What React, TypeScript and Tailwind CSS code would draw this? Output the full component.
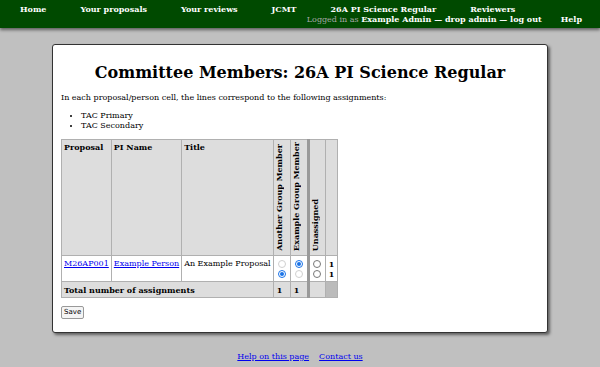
import React from "react"

const navTop = ["Home", "Your proposals", "Your reviews", "JCMT", "26A PI Science Regular", "Reviewers"]

function Radio({ checked, faint }: { checked?: boolean; faint?: boolean }) {
  if (checked) {
    return (
      <span className="mx-auto flex h-[8px] w-[8px] items-center justify-center rounded-full border border-[#1a73e8] bg-white">
        <span className="h-[4px] w-[4px] rounded-full bg-[#1a73e8]" />
      </span>
    )
  }
  return (
    <span
      className={
        "mx-auto block h-[8px] w-[8px] rounded-full border bg-white " +
        (faint ? "border-[#d0d0d0]" : "border-[#777]")
      }
    />
  )
}

export default function App() {
  return (
    <div className="min-h-[367px] bg-[#c0c0c0] font-['DejaVu_Serif',serif] text-[8px] text-black">
      <header className="h-[28px] bg-[#004a00] pt-[4px] font-bold text-white shadow-[0_2px_3px_rgba(0,0,0,0.5)]">
        <nav className="flex pl-[20px] leading-[10px]">
          {navTop.map((n, i) => (
            <span key={n} className={i === 0 ? "" : "ml-[34px]"}>
              {n}
            </span>
          ))}
        </nav>
        <div className="flex justify-end pr-[18px] leading-[10px]">
          <span>
            <span className="font-normal text-[#a8a8a8]">Logged in as </span>
            Example Admin — drop admin — log out
          </span>
          <span className="ml-[19px]">Help</span>
        </div>
      </header>

      <main className="mx-[52px] mt-[16px] h-[289px] rounded-[3px] border border-[#333] bg-white px-[8px] shadow-[2px_2px_3px_rgba(0,0,0,0.5)]">
        <h1 className="pt-[17px] text-center text-[16px] font-bold leading-[22px]">
          Committee Members: 26A PI Science Regular
        </h1>
        <p className="mt-[9px] leading-[10px]">
          In each proposal/person cell, the lines correspond to the following assignments:
        </p>
        <ul className="mt-[8px] list-disc pl-[20px] leading-[10px]">
          <li>TAC Primary</li>
          <li>TAC Secondary</li>
        </ul>
        <table className="mt-[8px] border-collapse leading-[10px]">
          <thead>
            <tr className="h-[116px] bg-[#dddddd]">
              <th className="border border-[#b0b0b0] px-[2px] pt-[2px] text-left align-top">Proposal</th>
              <th className="border border-[#b0b0b0] px-[2px] pt-[2px] text-left align-top">PI Name</th>
              <th className="border border-[#b0b0b0] px-[2px] pt-[2px] text-left align-top">Title</th>
              <th className="w-[17px] border border-[#b0b0b0] pb-[4px] align-bottom">
                <span className="mx-auto block rotate-180 text-left [writing-mode:vertical-rl]">Another Group Member</span>
              </th>
              <th className="w-[18px] border border-[#b0b0b0] border-r-[3px] border-r-[#999] pb-[4px] align-bottom">
                <span className="mx-auto block rotate-180 text-left [writing-mode:vertical-rl]">Example Group Member</span>
              </th>
              <th className="w-[17px] border border-[#b0b0b0] pb-[4px] align-bottom">
                <span className="mx-auto block rotate-180 text-left [writing-mode:vertical-rl]">Unassigned</span>
              </th>
              <th className="w-[12px] border border-[#b0b0b0]" />
            </tr>
          </thead>
          <tbody>
            <tr className="h-[26px]">
              <td className="border border-[#b0b0b0] px-[2px] pt-[3px] align-top">
                <a href="#" className="text-[#0000ee] underline">M26AP001</a>
              </td>
              <td className="border border-[#b0b0b0] px-[2px] pt-[3px] align-top">
                <a href="#" className="text-[#0000ee] underline">Example Person</a>
              </td>
              <td className="border border-[#b0b0b0] px-[2px] pt-[3px] align-top">An Example Proposal</td>
              <td className="border border-[#b0b0b0] pt-[4px] align-top">
                <div className="flex flex-col gap-[2px]">
                  <Radio faint />
                  <Radio checked />
                </div>
              </td>
              <td className="border border-[#b0b0b0] border-r-[3px] border-r-[#999] pt-[4px] align-top">
                <div className="flex flex-col gap-[2px]">
                  <Radio checked />
                  <Radio faint />
                </div>
              </td>
              <td className="border border-[#b0b0b0] pt-[4px] align-top">
                <div className="flex flex-col gap-[2px]">
                  <Radio />
                  <Radio />
                </div>
              </td>
              <td className="border border-[#b0b0b0] px-[3px] pt-[3px] align-top font-bold">
                <div>1</div>
                <div>1</div>
              </td>
            </tr>
            <tr className="h-[16px] bg-[#dddddd] font-bold">
              <td colSpan={3} className="border border-[#b0b0b0] px-[2px]">Total number of assignments</td>
              <td className="border border-[#b0b0b0] px-[3px]">1</td>
              <td className="border border-[#b0b0b0] border-r-[3px] border-r-[#999] px-[3px]">1</td>
              <td className="border border-[#b0b0b0]" />
              <td className="border border-[#b0b0b0] bg-[#bbbbbb]" />
            </tr>
          </tbody>
        </table>
        <button className="mt-[8px] h-[13px] rounded-[2px] border border-[#999] bg-[#f4f4f4] px-[2px] font-['DejaVu_Sans',sans-serif] text-[7px] leading-[11px]">
          Save
        </button>
      </main>

      <footer className="mt-[19px] flex justify-center gap-[10px] leading-[10px]">
        <a href="#" className="text-[#0000ee] underline">Help on this page</a>
        <a href="#" className="text-[#0000ee] underline">Contact us</a>
      </footer>
    </div>
  )
}
